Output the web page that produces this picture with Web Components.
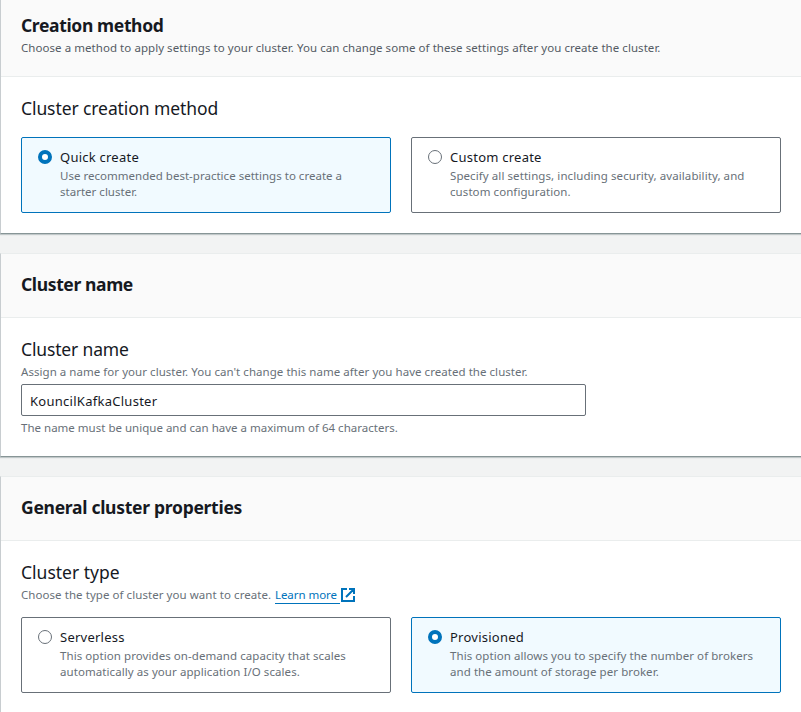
<!DOCTYPE html>
<html lang="en">
<head>
<meta charset="utf-8">
<title>Create cluster</title>
<style>
  html, body { margin: 0; height: 100%; overflow: hidden; background: #f2f3f3; }
  body { font-family: "Noto Sans", "Open Sans", sans-serif; color: #16191f; }
</style>
</head>
<body>
<msk-page>
  <msk-panel class="first">
    <msk-heading slot="header" style="letter-spacing:-.36px">Creation method</msk-heading>
    <msk-text slot="header" class="dark" style="letter-spacing:.055px">Choose a method to apply settings to your cluster. You can change some of these settings after you create the cluster.</msk-text>
    <msk-field>
      <msk-label slot="label" style="letter-spacing:-.09px">Cluster creation method</msk-label>
      <msk-tiles>
        <msk-tile checked label="Quick create"><msk-text style="letter-spacing:.015px">Use recommended best-practice settings to create a<br>starter cluster.</msk-text></msk-tile>
        <msk-tile label="Custom create"><msk-text style="letter-spacing:.08px">Specify all settings, including security, availability, and<br>custom configuration.</msk-text></msk-tile>
      </msk-tiles>
    </msk-field>
  </msk-panel>
  <msk-panel>
    <msk-heading slot="header" style="letter-spacing:-.37px">Cluster name</msk-heading>
    <msk-field>
      <msk-label slot="label" style="letter-spacing:-.15px">Cluster name</msk-label>
      <msk-text slot="description" style="letter-spacing:.045px">Assign a name for your cluster. You can't change this name after you have created the cluster.</msk-text>
      <msk-input>KouncilKafkaCluster</msk-input>
      <msk-text slot="hint" style="letter-spacing:.01px">The name must be unique and can have a maximum of 64 characters.</msk-text>
    </msk-field>
  </msk-panel>
  <msk-panel>
    <msk-heading slot="header" style="letter-spacing:-.28px">General cluster properties</msk-heading>
    <msk-field>
      <msk-label slot="label">Cluster type</msk-label>
      <msk-text slot="description" style="letter-spacing:.06px">Choose the type of cluster you want to create. <msk-link>Learn more</msk-link></msk-text>
      <msk-tiles class="after-description">
        <msk-tile label="Serverless"><msk-text style="letter-spacing:.07px">This option provides on-demand capacity that scales<br>automatically as your application I/O scales.</msk-text></msk-tile>
        <msk-tile checked label="Provisioned"><msk-text style="letter-spacing:.065px">This option allows you to specify the number of brokers<br>and the amount of storage per broker.</msk-text></msk-tile>
      </msk-tiles>
    </msk-field>
  </msk-panel>
</msk-page>
<script>
const define = (name, html) => customElements.define(name, class extends HTMLElement {
  connectedCallback() {
    if (this.shadowRoot) return;
    const root = this.attachShadow({ mode: 'open' });
    root.innerHTML = html;
    const title = root.querySelector('.title');
    if (title) title.textContent = this.getAttribute('label');
  }
});

define('msk-page', `<style>:host{display:flex;flex-direction:column;gap:19px}</style><slot></slot>`);

define('msk-panel', `<style>
  :host{display:block;background:#fff;border-left:1px solid #c8cdd0;border-top:1px solid #eaeded;border-bottom:1px solid #879596;box-shadow:0 1px 1px rgba(0,28,36,.2)}
  :host(.first){border-top:0}
  header{background:#fafafa;border-bottom:1px solid #eaeded;padding:19px 20px 22px;display:flex;flex-direction:column;gap:4px}
  :host(.first) header{padding:14px 20px 20px}
  .body{padding:20px}
</style><header><slot name="header"></slot></header><div class="body"><slot></slot></div>`);

define('msk-heading', `<style>:host{display:block;font-size:17.5px;font-weight:700;line-height:22px;white-space:nowrap}</style><slot></slot>`);
define('msk-label', `<style>:host{display:block;font-size:17.5px;line-height:22px;white-space:nowrap}</style><slot></slot>`);
define('msk-text', `<style>:host{display:block;font-size:11.5px;line-height:16px;color:#687078;white-space:nowrap}:host(.dark){color:#545b64}</style><slot></slot>`);

define('msk-field', `<style>
  :host{display:flex;flex-direction:column;gap:4px}
</style><slot name="label"></slot><slot name="description"></slot><slot></slot><slot name="hint"></slot>`);

define('msk-tiles', `<style>
  :host{display:grid;grid-template-columns:1fr 1fr;gap:20px;margin-top:14px}
  :host(.after-description){margin-top:10px}
</style><slot></slot>`);

define('msk-tile', `<style>
  :host{display:grid;grid-template-columns:14px 1fr;column-gap:8px;box-sizing:border-box;height:76px;padding:9px 16px;border:1px solid #687078;border-radius:2px;background:#fff}
  :host([checked]){border-color:#0073bb;background:#f1faff}
  svg{display:block;width:14px;height:14px;margin-top:3px}
  circle{fill:#fff;stroke:#687078;stroke-width:1}
  :host([checked]) circle{stroke:#0073bb;stroke-width:4}
  :host([checked]) .off, :host(:not([checked])) .on{display:none}
  .title{font-size:13px;line-height:20px;letter-spacing:.24px;margin-bottom:1px;white-space:nowrap}
</style>
<svg viewBox="0 0 14 14"><circle class="off" cx="7" cy="7" r="6.5"/><circle class="on" cx="7" cy="7" r="5"/></svg>
<div><div class="title"></div><slot></slot></div>`);

define('msk-input', `<style>
  :host{display:block;box-sizing:border-box;width:565px;height:32px;padding:1px 8px 0;border:1px solid #687078;border-radius:2px;background:#fff;font-size:13px;line-height:30px;letter-spacing:.27px}
</style><slot></slot>`);

define('msk-link', `<style>
  :host{display:inline-flex;height:16px;margin-left:.7px;color:#0073bb;letter-spacing:-.04px;vertical-align:top}
  span{height:16px;border-bottom:1px solid #0073bb;padding-right:3px}
  svg{width:14px;height:14px;margin:1px 0 0 1px}
  path{fill:none;stroke:#0073bb;stroke-width:2}
</style><span><slot></slot></span><svg viewBox="0 0 14 14"><path d="M6 1H1v12h12V8M8 1h5v5M12.5 1.5L5 9"/></svg>`);
</script>
</body>
</html>
